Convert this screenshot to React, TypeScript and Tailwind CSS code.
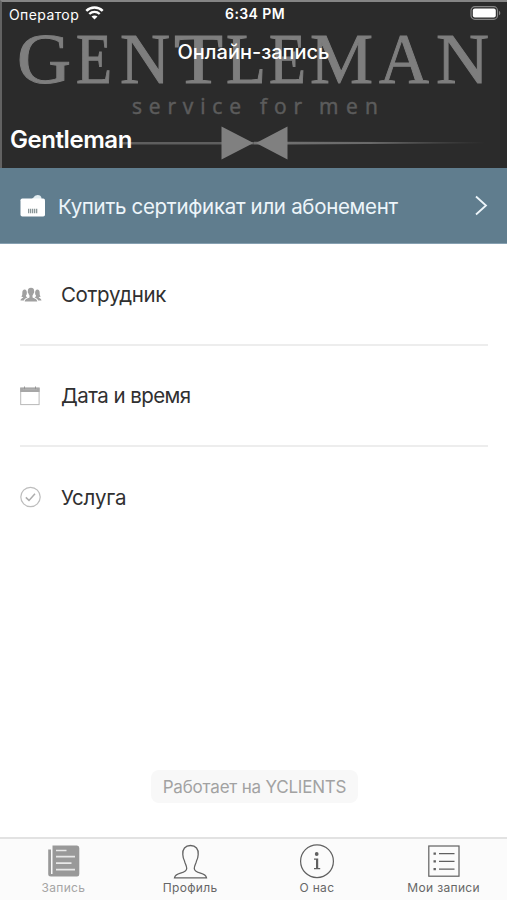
import { ReactNode } from 'react'

interface MenuItem {
  id: string
  title: string
  icon: ReactNode
  titleClass: string
}

interface TabItem {
  id: string
  title: string
  icon: ReactNode
  isActive?: boolean
}

interface LogoLetter {
  char: string
  x: number
  width: number
}

const logoLetters: LogoLetter[] = [
  { char: 'G', x: 17, width: 54 },
  { char: 'E', x: 76, width: 36 },
  { char: 'N', x: 120, width: 50 },
  { char: 'T', x: 174, width: 49 },
  { char: 'L', x: 226, width: 40 },
  { char: 'E', x: 269, width: 37 },
  { char: 'M', x: 310, width: 63 },
  { char: 'A', x: 379, width: 50 },
  { char: 'N', x: 436, width: 53 },
]

function HeaderLogo() {
  return (
    <svg className="absolute inset-0 h-full w-full" viewBox="0 0 507 168" aria-hidden="true">
      <defs>
        <linearGradient id="line-fade" x1="0" x2="1" y1="0" y2="0">
          <stop offset="0" stopColor="#727272" />
          <stop offset="0.5" stopColor="#6a6a6a" />
          <stop offset="1" stopColor="#2b2b2b" />
        </linearGradient>
      </defs>
      <g fill="#7e7e7e" stroke="#7e7e7e" strokeWidth="1" fontFamily="'Liberation Serif', serif" fontSize="71">
        {logoLetters.map((letter, index) => (
          <text key={index} x={letter.x} y="82.500" textLength={letter.width} lengthAdjust="spacingAndGlyphs">
            {letter.char}
          </text>
        ))}
      </g>
      <g fill="#5c5c5c" stroke="#5c5c5c" strokeWidth="0.5" fontFamily="'Open Sans', sans-serif" fontSize="21">
        <text x="132" y="114" textLength="109">service</text>
        <text x="260" y="114" textLength="42">for</text>
        <text x="319" y="114" textLength="59">men</text>
      </g>
      <rect x="120" y="142" width="134" height="2.5" fill="#5f5f5f" />
      <path d="M254 141.800 H287 L486 142.300 V143.300 L287 144.500 H254 Z" fill="url(#line-fade)" />
      <path d="M221.500 126.500 L253.500 143 L221.500 159.500 Z M287.500 126.500 L256 143 L287.500 159.500 Z" fill="#808080" />
    </svg>
  )
}

function StatusBar() {
  return (
    <div className="relative flex h-7 items-center justify-between pr-[6px] pl-[9px] text-[13.5px] text-white">
      <div className="flex flex-1 items-center gap-[6px]">
        <span className="text-[14px] tracking-[0.4px]">Оператор</span>
        <svg className="-mt-[3px] h-[14px] w-[19px]" viewBox="0 0 19 14" fill="none" stroke="white">
          <path d="M1.300 4.900 C5.900 0.400 13.100 0.400 17.700 4.900" strokeWidth="2.500" />
          <path d="M4.300 8 C7.200 5.200 11.800 5.200 14.700 8" strokeWidth="2.400" />
          <path d="M9.500 13.500 L6.500 10.500 C8.200 9 10.800 9 12.500 10.500 Z" fill="white" stroke="none" />
        </svg>
      </div>
      <span className="-mt-[2px] text-[14px] font-semibold tracking-[0.4px]">6:34 PM</span>
      <div className="flex flex-1 justify-end">
        <svg className="-mt-[3px] h-[14px] w-[31px]" viewBox="0 0 31 14">
          <rect x="1" y="0.700" width="26.500" height="12.600" rx="3.800" fill="none" stroke="#858585" strokeWidth="1.200" />
          <rect x="2.800" y="2.400" width="23" height="9.200" rx="2" fill="white" />
          <path d="M29 4.700 C30.800 5.500 30.800 8.500 29 9.300 Z" fill="#858585" />
        </svg>
      </div>
    </div>
  )
}

function StaffIcon() {
  return (
    <svg className="h-[16px] w-[22px]" viewBox="0 0 22 16" fill="#a0a0a0">
      <path d="M11 0.800 C8.600 0.800 7.700 2.300 7.900 4.300 C7.500 4.500 7.800 6.100 8.400 6.300 C8.600 7.400 9.100 8 9.500 8.500 V10.300 C8.700 11.600 5 11.400 4.700 14.500 H17.300 C17 11.400 13.300 11.600 12.500 10.300 V8.500 C12.900 8 13.400 7.400 13.600 6.300 C14.200 6.100 14.500 4.500 14.100 4.300 C14.300 2.300 13.400 0.800 11 0.800 Z" />
      <path d="M5.500 2.700 C3.500 2.200 2.200 3.500 2.300 6 C2.300 7.800 2.300 8.700 1.300 9.400 C2 10 2.700 10.100 3.300 10.200 C3.300 11.200 0.800 11 0.500 13.500 H3.900 C4.500 11.600 6.100 11.200 7.400 10.500 C6.300 10 5.800 9.500 6 8.600 C7.200 7.500 7.300 3.500 5.500 2.700 Z" />
      <path d="M16.500 2.700 C18.500 2.200 19.800 3.500 19.700 6 C19.700 7.800 19.700 8.700 20.700 9.400 C20 10 19.300 10.100 18.700 10.200 C18.700 11.200 21.200 11 21.500 13.500 H18.100 C17.500 11.600 15.900 11.200 14.600 10.500 C15.700 10 16.200 9.500 16 8.600 C14.800 7.500 14.700 3.500 16.500 2.700 Z" />
    </svg>
  )
}

function CalendarIcon() {
  return (
    <svg className="h-[20px] w-[20px]" viewBox="0 0 20 20">
      <rect x="0.700" y="2" width="18.400" height="16.600" fill="none" stroke="#b8b8b8" />
      <path d="M0.200 1.700 H19.600 V6 H0.200 Z" fill="#a7a7a7" />
      <path d="M4.500 0.500 V3.500 M15.500 0.500 V3.500" stroke="#969696" />
      <path d="M3.500 3.500 H16.500" stroke="#b8b8b8" strokeDasharray="1 1" />
    </svg>
  )
}

function ServiceIcon() {
  return (
    <svg className="-mt-[2px] h-[22px] w-[22px]" viewBox="0 0 22 22" fill="none">
      <circle cx="10.500" cy="11" r="9.700" stroke="#bdbdbd" strokeWidth="1.200" />
      <path d="M5.800 11.400 L9 14.400 L15 7.700" stroke="#adadad" strokeWidth="1.500" />
    </svg>
  )
}

const menuItems: MenuItem[] = [
  { id: 'staff', title: 'Сотрудник', icon: <StaffIcon />, titleClass: 'tracking-[-0.35px]' },
  { id: 'date', title: 'Дата и время', icon: <CalendarIcon />, titleClass: 'tracking-[-0.55px]' },
  { id: 'service', title: 'Услуга', icon: <ServiceIcon />, titleClass: 'tracking-[-0.2px]' },
]

const tabs: TabItem[] = [
  {
    id: 'booking',
    title: 'Запись',
    isActive: true,
    icon: (
      <svg className="h-[36px] w-[36px]" viewBox="0 0 36 36" fill="none">
        <path d="M7.500 2.500 H32 Q34.300 2.500 34.300 5 V31 Q34.300 33.500 32 33.500 H6 Q3.200 33.500 3.200 31 V6.500 H6 V31 H7.500 Z" fill="#999999" />
        <path d="M11 7.500 H21.500 M11 13.700 H30 M11 20.200 H26.500 M11 26.700 H30" stroke="#e8e8e8" strokeWidth="1.700" />
      </svg>
    ),
  },
  {
    id: 'profile',
    title: 'Профиль',
    icon: (
      <svg className="h-[36px] w-[36px]" viewBox="0 0 36 36" fill="none" stroke="#646464" strokeWidth="1.300">
        <path d="M18.500 2.500 C13.200 2.500 10.300 6.100 10.800 11.500 C11 14.500 11.500 16.500 12.500 18 C13 21 14.700 22.500 14.700 25.500 C14.700 28.300 12.200 29.100 8.500 30.100 C5 31 3 32 2.500 34.800 H34.500 C34 32 32 31 28.500 30.100 C24.800 29.100 22.300 28.300 22.300 25.500 C22.300 22.500 24 21 24.500 18 C25.500 16.500 26 14.500 26.200 11.500 C26.700 6.100 23.800 2.500 18.500 2.500 Z" />
      </svg>
    ),
  },
  {
    id: 'about',
    title: 'О нас',
    icon: (
      <svg className="h-[36px] w-[36px]" viewBox="0 0 36 36" fill="none" stroke="#606060" strokeWidth="1.200">
        <circle cx="18" cy="18.200" r="16.400" />
        <circle cx="17.700" cy="11" r="1.900" fill="#606060" stroke="none" />
        <path d="M15 15.500 H19.200 V25 H21.200 V26.200 H15 V25 H17 V16.700 H15 Z" fill="#606060" stroke="none" />
      </svg>
    ),
  },
  {
    id: 'records',
    title: 'Мои записи',
    icon: (
      <svg className="h-[36px] w-[36px]" viewBox="0 0 36 36" fill="none" stroke="#606060" strokeWidth="1.200">
        <rect x="2.800" y="3" width="30.200" height="30.200" />
        <path d="M13 10.700 H28.500 M13 18.400 H28.500 M13 26.200 H28.500" />
        <path d="M7.500 10.700 H9.900 M7.500 18.400 H9.900 M7.500 26.200 H9.900" strokeWidth="2.200" />
      </svg>
    ),
  },
]

export default function App() {
  return (
    <div className="flex h-[900px] w-[507px] flex-col overflow-hidden bg-white font-['Inter','Liberation_Sans',sans-serif] text-[#303030]">
      <header className="relative h-[168px] shrink-0 border-t-2 border-l-2 border-t-[#858585] border-l-[#626262] bg-[#2b2b2b]">
        <div className="absolute -top-0.5 -left-0.5 h-[168px] w-[507px]">
          <HeaderLogo />
        </div>
        <div className="relative -mt-0.5 -ml-0.5 flex h-[168px] w-[507px] flex-col text-white">
          <StatusBar />
          <h1 className="mt-[9px] text-center text-[20px] leading-[30px] font-medium">Онлайн-запись</h1>
          <h2 className="mt-[58px] pl-[10px] text-[24px] leading-[30px] font-semibold tracking-[-0.45px]">Gentleman</h2>
        </div>
      </header>

      <button className="flex h-[76px] shrink-0 items-center border-b border-[#86a0b1] bg-[#607d8e] pr-[18px] pl-5 text-left text-[#edf5fa]">
        <svg className="h-[24px] w-[26px]" viewBox="0 0 26 24">
          <path d="M11 5.500 Q12.500 4.500 13.500 3.500 Q14.500 1 17.500 1 Q21 1 21.500 4 V6 H11 Z" fill="#e3edf1" />
          <rect x="0.500" y="4.500" width="24.500" height="18" rx="1.800" fill="white" />
          <path d="M8 17 H18" stroke="#8a9698" strokeWidth="4.500" strokeDasharray="1.300 0.700" />
        </svg>
        <span className="ml-[12px] flex-1 pt-[3px] text-[20.5px] tracking-[-0.31px] whitespace-nowrap">
          Купить сертификат или абонемент
        </span>
        <svg className="h-[22px] w-[14px]" viewBox="0 0 14 22" fill="none" stroke="currentColor" strokeWidth="1.800">
          <path d="M1 1.500 L11 10.500 L1 19.500" />
        </svg>
      </button>

      <main className="flex-1 pt-px pr-[19px] pl-5">
        {menuItems.map((item, index) => (
          <div
            key={item.id}
            className={`flex h-[101px] items-center ${index < menuItems.length - 1 ? 'border-b-2 border-[#ededed]' : ''}`}
          >
            <div className="flex w-[41px] shrink-0">{item.icon}</div>
            <span className={`text-[20.5px] ${index < menuItems.length - 1 ? 'pt-[2px]' : 'pt-px'} ${item.titleClass}`}>
              {item.title}
            </span>
          </div>
        ))}
      </main>

      <div className="mb-[34px] ml-[151px] flex h-[33px] w-[207px] shrink-0 items-center justify-center rounded-lg bg-[#f8f8f8] pt-[2px] text-[17px] tracking-[-0.2px] whitespace-nowrap text-[#a2a2a2]">
        Работает на YCLIENTS
      </div>

      <nav className="flex h-[63px] shrink-0 border-t-2 border-[#e2e2e2] bg-[#fbfbfb]">
        {tabs.map((tab) => (
          <div
            key={tab.id}
            className={`flex flex-1 flex-col items-center pt-1 text-[12px] ${tab.isActive ? 'text-[#a5a5a5]' : 'text-[#666666]'}`}
          >
            {tab.icon}
            <span className="pt-px leading-[16px] tracking-[0.35px]">{tab.title}</span>
          </div>
        ))}
      </nav>
    </div>
  )
}
